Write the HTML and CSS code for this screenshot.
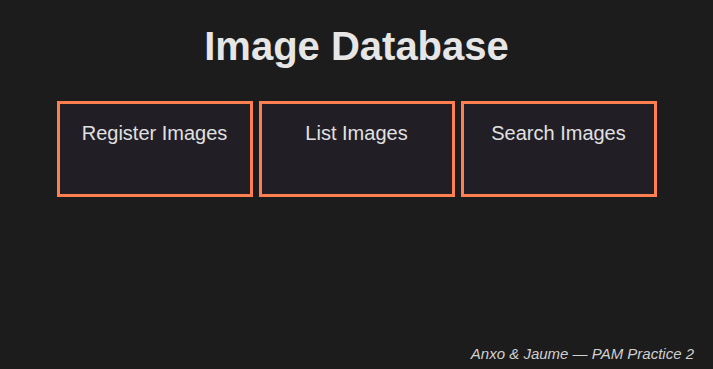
FILE: index.html
```html
<!DOCTYPE html>
<html lang="en">
<head>
  <meta charset="UTF-8" />
  <meta name="viewport" content="width=device-width, initial-scale=1.0" />
  <title>Image Database</title>
  <link rel="stylesheet" href="styles.css">
</head>
<body>
  <div class="container">
    <h1>Image Database</h1>
    <div class="menu">
      <a class="menu-item" href="#register">Register Images</a>
      <a class="menu-item" href="#list">List Images</a>
      <a class="menu-item" href="#search">Search Images</a>
    </div>
  </div>
  <footer class="footer">Anxo &amp; Jaume — PAM Practice 2</footer>
</body>
</html>
```

FILE: styles.css
```css
html, body { height: 100%; }
body { margin: 0; font-family: "Liberation Sans", Arial, sans-serif; background: #1c1c1c; color: #e0e0e0; position: relative; }
h1 { margin: 0; padding-top: 24px; font-size: 40px; text-align: center; color: #e6e6e6; }
.container { max-width: 600px; margin: 0 auto; }
.menu { display: flex; gap: 6px; margin-top: 32px; }
.menu-item { flex: 1; height: 96px; box-sizing: border-box; padding-top: 18px; border: 3px solid #ff7f50; background: #221e26; color: #e0e0e0; text-decoration: none; text-align: center; font-size: 20px; }
.footer { position: absolute; right: 19px; bottom: 7px; font-style: italic; font-size: 15px; color: #d0d0d0; }
```
